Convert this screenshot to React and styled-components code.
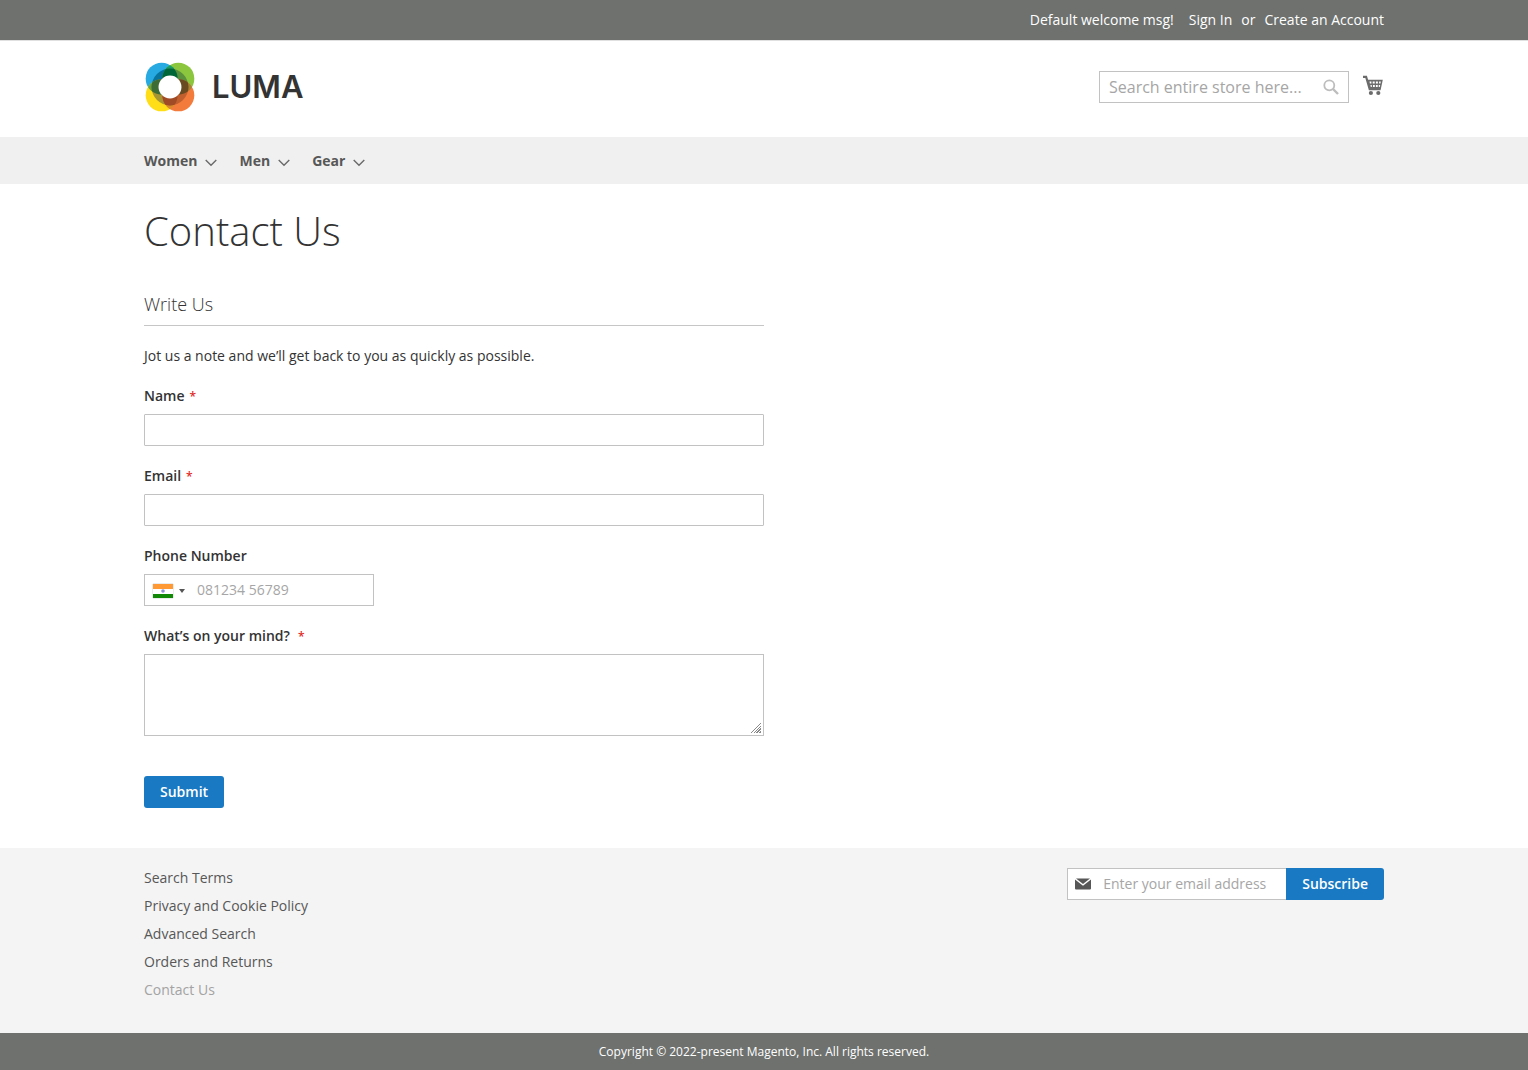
import React from "react";
import styled, { createGlobalStyle } from "styled-components";

const GlobalStyle = createGlobalStyle`
  *, *::before, *::after { box-sizing: border-box; }
  body {
    margin: 0;
    background: #fff;
    color: #333;
    font: 400 14px/20px "Open Sans", "Noto Sans", sans-serif;
  }
  button, input, textarea, select { font: inherit; }
`;

const Page = styled.div`
  min-height: 100vh;
  display: flex;
  flex-direction: column;
`;

const Container = styled.div`
  width: 100%;
  max-width: 1280px;
  margin: 0 auto;
  padding: 0 20px;
`;

const TopBar = styled.div`
  background: #6e716e;
  color: #fff;
  border-bottom: 1px solid #e0e0e0;
`;

const TopLinks = styled(Container)`
  display: flex;
  justify-content: flex-end;
  align-items: center;
  height: 40px;
`;

const Welcome = styled.span`
  margin-right: 15px;
`;

const TopLink = styled.a`
  color: #fff;
  text-decoration: none;
`;

const Or = styled.span`
  margin: 0 9px;
`;

const HeaderRow = styled(Container)`
  display: flex;
  justify-content: space-between;
  align-items: flex-start;
  height: 96px;
  padding-top: 21px;
`;

const Logo = styled.a`
  display: flex;
  align-items: center;
  gap: 17px;
  color: #333;
  text-decoration: none;
`;

const LogoMark = styled.svg`
  width: 50px;
  height: 50px;
  margin-left: 1px;
`;

const LogoText = styled.span`
  font: 600 31px/50px Inter, sans-serif;
`;

const HeaderTools = styled.div`
  display: flex;
  align-items: center;
  gap: 14px;
  padding-top: 9px;
`;

const SearchForm = styled.form`
  display: flex;
  align-items: center;
  width: 250px;
  height: 32px;
  border: 1px solid #c2c2c2;
  background: #fff;
`;

const BareInput = styled.input`
  flex: 1;
  min-width: 0;
  height: 30px;
  padding: ${(p) => (p.$large ? "0 9px" : "0 9px 2px")};
  border: 0;
  outline: 0;
  background: transparent;
  color: #333;
  font-size: ${(p) => (p.$large ? "16px" : "14px")};
  &::placeholder { color: #a6a6a6; opacity: 1; }
`;

const IconButton = styled.button`
  display: flex;
  padding: 0;
  border: 0;
  background: none;
  cursor: pointer;
`;

const SearchButton = styled(IconButton)`
  margin-right: 9px;
`;

const CartLink = styled.a`
  display: flex;
  margin-bottom: 3px;
`;

const Nav = styled.nav`
  background: #f0f0f0;
`;

const NavList = styled(Container).attrs({ as: "ul" })`
  display: flex;
  align-items: center;
  gap: 22px;
  height: 47px;
  list-style: none;
`;

const NavLink = styled.a`
  display: flex;
  align-items: center;
  gap: 8px;
  color: #575757;
  font-weight: 700;
  text-decoration: none;
  svg { margin-top: 4px; }
`;

const Main = styled(Container).attrs({ as: "main" })`
  flex: 1 0 auto;
  padding-top: 25px;
  padding-bottom: 40px;
`;

const Title = styled.h1`
  margin: 0 0 40px;
  font-size: 40px;
  line-height: 44px;
  font-weight: 300;
`;

const ContactForm = styled.form`
  width: 50%;
`;

const FormTitle = styled.h2`
  margin: 0 0 20px;
  padding-bottom: 10px;
  border-bottom: 1px solid #c6c6c6;
  font-size: 18px;
  line-height: 22px;
  font-weight: 300;
`;

const Note = styled.p`
  margin: 0 0 20px;
`;

const Field = styled.div`
  display: flex;
  flex-direction: column;
  align-items: flex-start;
  margin-bottom: 20px;
`;

const Label = styled.label`
  margin-bottom: 8px;
  font-weight: 600;
`;

const Star = styled.span`
  margin-left: ${(p) => (p.$wide ? "8px" : "5px")};
  color: #e02b27;
  font-size: 12px;
  line-height: 12px;
`;

const TextInput = styled.input`
  width: 100%;
  height: 32px;
  padding: 0 9px;
  border: 1px solid #c2c2c2;
  border-radius: 1px;
  outline: 0;
`;

const TextArea = styled.textarea`
  display: block;
  width: 100%;
  height: 82px;
  padding: 10px;
  border: 1px solid #c2c2c2;
  outline: 0;
  resize: vertical;
  &::-webkit-resizer {
    background:
      linear-gradient(135deg, #fff 50%, transparent 50%) right 2px bottom 2px / 11px 11px no-repeat,
      repeating-linear-gradient(135deg, #8a8a8a 0 1px, #fff 1px 2px) right 2px bottom 2px / 11px 11px no-repeat;
  }
`;

const PhoneBox = styled.div`
  display: flex;
  align-items: center;
  width: 230px;
  height: 32px;
  border: 1px solid #c2c2c2;
`;

const Country = styled.div`
  position: relative;
  display: flex;
  align-items: center;
  gap: 6px;
  height: 30px;
  padding: 2px 0 0 8px;
`;

const CountrySelect = styled.select`
  position: absolute;
  inset: 0;
  width: 100%;
  opacity: 0;
  cursor: pointer;
`;

const Flag = styled.svg`
  width: 20px;
  height: 14px;
  box-shadow: 0 0 1px #888;
`;

const Caret = styled.span`
  border: 3px solid transparent;
  border-top: 4px solid #555;
  border-bottom: 0;
`;

const PhoneInput = styled(BareInput)`
  padding-left: 12px;
`;

const PrimaryButton = styled.button`
  height: 32px;
  padding: 0 16px;
  border: 0;
  border-radius: ${(p) => (p.$joined ? "0 3px 3px 0" : "3px")};
  background: #1979c3;
  color: #fff;
  font-weight: 600;
  cursor: pointer;
`;

const Actions = styled.div`
  padding-top: 20px;
`;

const Footer = styled.footer`
  background: #f4f4f4;
`;

const FooterRow = styled(Container)`
  display: flex;
  justify-content: space-between;
  align-items: flex-start;
  padding-top: 20px;
  padding-bottom: 33px;
`;

const FooterLinks = styled.ul`
  display: flex;
  flex-direction: column;
  gap: 8px;
  margin: 0;
  padding: 0;
  list-style: none;
`;

const FooterLink = styled.a`
  color: ${(p) => (p.$current ? "#a3a3a3" : "#575757")};
  text-decoration: none;
`;

const Newsletter = styled.form`
  display: flex;
`;

const NewsletterField = styled.div`
  display: flex;
  align-items: center;
  width: 219px;
  height: 32px;
  padding-left: 7px;
  border: 1px solid #c2c2c2;
  border-right: 0;
  background: #fff;
`;

const NewsletterInput = styled(BareInput)`
  padding: 0 0 2px 12px;
`;

const Copyright = styled.small`
  display: block;
  padding: 9px 20px 8px;
  background: #6e716e;
  color: #fff;
  font-size: 12px;
  text-align: center;
`;

const LumaMark = () => (
  <LogoMark viewBox="0 0 51 51" aria-hidden="true">
    <defs>
      <clipPath id="blue"><circle cx="17" cy="17" r="16.3" /></clipPath>
      <clipPath id="green"><circle cx="34" cy="17" r="16.3" /></clipPath>
      <clipPath id="yellow"><circle cx="17" cy="34" r="16.3" /></clipPath>
      <clipPath id="orange"><circle cx="34" cy="34" r="16.3" /></clipPath>
      <clipPath id="core"><circle cx="25.5" cy="25.5" r="18.8" /></clipPath>
    </defs>
    <circle cx="17" cy="17" r="16.3" fill="#27a9e1" />
    <circle cx="34" cy="17" r="16.3" fill="#8cc63f" />
    <circle cx="17" cy="34" r="16.3" fill="#ffde17" />
    <circle cx="34" cy="34" r="16.3" fill="#f37b3c" />
    <g clipPath="url(#blue)">
      <circle cx="34" cy="17" r="16.3" fill="#159d68" />
      <circle cx="17" cy="34" r="16.3" fill="#6ba43a" />
    </g>
    <circle cx="34" cy="34" r="16.3" fill="#a78234" clipPath="url(#green)" />
    <circle cx="34" cy="34" r="16.3" fill="#d88b2b" clipPath="url(#yellow)" />
    <g clipPath="url(#core)">
      <circle cx="17" cy="17" r="16.3" fill="#08739b" />
      <circle cx="34" cy="17" r="16.3" fill="#5b903d" />
      <circle cx="17" cy="34" r="16.3" fill="#a79533" />
      <circle cx="34" cy="34" r="16.3" fill="#c1602e" />
      <circle cx="34" cy="17" r="16.3" fill="#006838" clipPath="url(#blue)" />
      <circle cx="17" cy="34" r="16.3" fill="#3d6c34" clipPath="url(#blue)" />
      <circle cx="34" cy="34" r="16.3" fill="#694a20" clipPath="url(#green)" />
      <circle cx="34" cy="34" r="16.3" fill="#a04b25" clipPath="url(#yellow)" />
    </g>
    <circle cx="25.5" cy="25.5" r="11.7" fill="#fff" />
  </LogoMark>
);

const SearchIcon = () => (
  <svg width="16" height="16" viewBox="0 0 16 16" fill="none" stroke="#bdbdbd" aria-hidden="true">
    <circle cx="6.3" cy="6.3" r="5" strokeWidth="1.8" />
    <path d="M10 10L15 15" strokeWidth="2.4" />
  </svg>
);

const CartIcon = () => (
  <svg width="21" height="21" viewBox="0.5 0 21 21" fill="none" aria-hidden="true">
    <path d="M0.5 1.8H3.6L7.2 14.2H18" stroke="#6b6b6b" strokeWidth="2.2" />
    <path d="M4.3 4.8H20.3L18.2 14.5H7Z" fill="#6b6b6b" />
    <path d="M7 6.6h1.9v2H7.4zM10.2 6.6h2v2h-2zM13.4 6.6h2v2h-2zM16.6 6.6h1.7l-.3 2h-1.4zM7.9 10h1.4v2H8.3zM10.5 10h1.8v2h-1.8zM13.4 10h1.8v2h-1.8zM16.3 10h1.4l-.4 2h-1z" fill="#fff" />
    <circle cx="8.4" cy="18" r="2.1" fill="#6b6b6b" />
    <circle cx="15.8" cy="18" r="2.1" fill="#6b6b6b" />
  </svg>
);

const Chevron = () => (
  <svg width="12" height="8" viewBox="0 0 12 8" fill="none" stroke="#6a6a6a" strokeWidth="1.4" aria-hidden="true">
    <path d="M0.7 1L6 6.3L11.3 1" />
  </svg>
);

const MailIcon = () => (
  <svg width="16" height="12" viewBox="0 0 16 12" aria-hidden="true">
    <path d="M1 0.5H15L8 6Z" fill="#575757" />
    <path d="M0 1.4L8 7.8L16 1.4V10.5Q16 11.5 15 11.5H1Q0 11.5 0 10.5Z" fill="#575757" />
  </svg>
);

const IndiaFlag = () => (
  <Flag viewBox="0 0 20 14" aria-hidden="true">
    <rect width="20" height="14" fill="#fff" />
    <rect width="20" height="5" fill="#ff9933" />
    <rect y="10" width="20" height="4" fill="#128807" />
    <circle cx="10" cy="7" r="1.8" fill="#8f90d4" />
  </Flag>
);

const menu = ["Women", "Men", "Gear"];
const footerLinks = [
  "Search Terms",
  "Privacy and Cookie Policy",
  "Advanced Search",
  "Orders and Returns",
  "Contact Us",
];

export default function App() {
  const stop = (event) => event.preventDefault();
  return (
    <Page>
      <GlobalStyle />
      <header>
        <TopBar>
          <TopLinks>
            <Welcome>Default welcome msg!</Welcome>
            <TopLink href="#sign-in">Sign In</TopLink>
            <Or>or</Or>
            <TopLink href="#create">Create an Account</TopLink>
          </TopLinks>
        </TopBar>
        <HeaderRow>
          <Logo href="#home">
            <LumaMark />
            <LogoText>LUMA</LogoText>
          </Logo>
          <HeaderTools>
            <SearchForm role="search" onSubmit={stop}>
              <BareInput $large type="text" aria-label="Search" placeholder="Search entire store here..." />
              <SearchButton type="submit" aria-label="Search"><SearchIcon /></SearchButton>
            </SearchForm>
            <CartLink href="#cart" aria-label="My Cart"><CartIcon /></CartLink>
          </HeaderTools>
        </HeaderRow>
      </header>
      <Nav>
        <NavList>
          {menu.map((item) => (
            <li key={item}>
              <NavLink href={`#${item.toLowerCase()}`}>{item}<Chevron /></NavLink>
            </li>
          ))}
        </NavList>
      </Nav>
      <Main>
        <Title>Contact Us</Title>
        <ContactForm onSubmit={stop}>
          <FormTitle>Write Us</FormTitle>
          <Note>Jot us a note and we’ll get back to you as quickly as possible.</Note>
          <Field>
            <Label htmlFor="name">Name<Star>*</Star></Label>
            <TextInput id="name" type="text" />
          </Field>
          <Field>
            <Label htmlFor="email">Email<Star>*</Star></Label>
            <TextInput id="email" type="email" />
          </Field>
          <Field>
            <Label htmlFor="phone">Phone Number</Label>
            <PhoneBox>
              <Country>
                <IndiaFlag />
                <Caret />
                <CountrySelect aria-label="Country" defaultValue="in">
                  <option value="in" aria-label="India" />
                </CountrySelect>
              </Country>
              <PhoneInput id="phone" type="tel" placeholder="081234 56789" />
            </PhoneBox>
          </Field>
          <Field>
            <Label htmlFor="comment">What’s on your mind?<Star $wide>*</Star></Label>
            <TextArea id="comment" />
          </Field>
          <Actions>
            <PrimaryButton type="submit">Submit</PrimaryButton>
          </Actions>
        </ContactForm>
      </Main>
      <Footer>
        <FooterRow>
          <FooterLinks>
            {footerLinks.map((item) => (
              <li key={item}>
                <FooterLink href="#page" $current={item === "Contact Us"}>{item}</FooterLink>
              </li>
            ))}
          </FooterLinks>
          <Newsletter onSubmit={stop}>
            <NewsletterField>
              <MailIcon />
              <NewsletterInput type="email" aria-label="Newsletter email" placeholder="Enter your email address" />
            </NewsletterField>
            <PrimaryButton $joined type="submit">Subscribe</PrimaryButton>
          </Newsletter>
        </FooterRow>
        <Copyright>Copyright © 2022-present Magento, Inc. All rights reserved.</Copyright>
      </Footer>
    </Page>
  );
}
